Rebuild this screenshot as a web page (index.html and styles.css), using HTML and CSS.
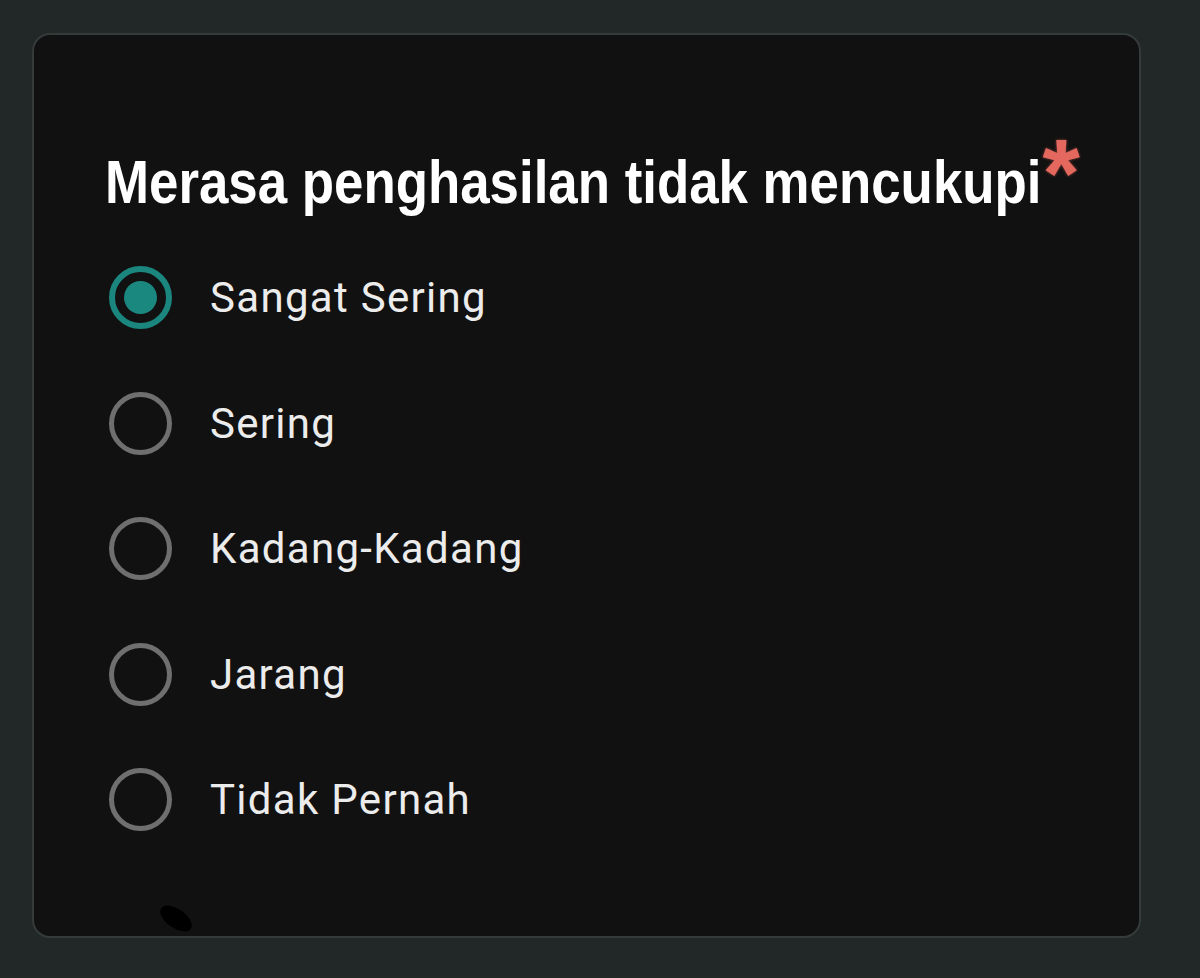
FILE: index.html
```html
<!DOCTYPE html>
<html lang="id">
<head>
<meta charset="utf-8">
<title>Merasa penghasilan tidak mencukupi</title>
<link rel="stylesheet" href="styles.css">
</head>
<body>
<div class="card">
  <h1 class="title"><span class="title-text">Merasa penghasilan tidak mencukupi</span><span class="req">*</span></h1>
  <div class="options">
    <label class="option"><span class="radio checked"></span><span class="label">Sangat Sering</span></label>
    <label class="option"><span class="radio"></span><span class="label">Sering</span></label>
    <label class="option"><span class="radio"></span><span class="label">Kadang-Kadang</span></label>
    <label class="option"><span class="radio"></span><span class="label">Jarang</span></label>
    <label class="option"><span class="radio"></span><span class="label">Tidak Pernah</span></label>
  </div>
  <span class="smudge"></span>
</div>
</body>
</html>
```
FILE: styles.css
```css
html, body {
  margin: 0;
  padding: 0;
}
body {
  background: #212827;
  width: 1200px;
  height: 978px;
  overflow: hidden;
}
.card {
  position: relative;
  box-sizing: border-box;
  margin: 33px 0 0 32px;
  width: 1109px;
  height: 905px;
  background: #111111;
  border: 2px solid #343b3a;
  border-radius: 18px;
  padding: 112px 0 0 71px;
}
.title {
  margin: 0;
  font-family: "Liberation Sans", Arial, sans-serif;
  font-weight: 700;
  font-size: 61px;
  line-height: 70px;
  height: 70px;
  color: #ffffff;
  white-space: nowrap;
}
.title-text {
  display: inline-block;
  transform: scaleX(0.866);
  transform-origin: 0 0;
  margin-right: -145px;
}
.req {
  font-size: 96px;
  line-height: 0;
  color: #e4685d;
  margin-left: 1px;
  vertical-align: -3px;
  text-shadow: 0 0 3px rgba(228, 104, 93, 0.6);
}
.options {
  display: flex;
  flex-direction: column;
  gap: 62.5px;
  margin-top: 49px;
  padding-left: 4px;
}
.option {
  display: flex;
  align-items: center;
  gap: 38px;
  height: 63px;
}
.radio {
  box-sizing: border-box;
  width: 63px;
  height: 63px;
  border-radius: 50%;
  border: 5px solid #6f6f6f;
  display: flex;
  align-items: center;
  justify-content: center;
  flex: none;
}
.radio.checked {
  border: 6px solid #1a867e;
}
.radio.checked::after {
  content: "";
  width: 33px;
  height: 33px;
  border-radius: 50%;
  background: #1b8880;
}
.label {
  font-family: Roboto, "Liberation Sans", sans-serif;
  font-size: 42px;
  letter-spacing: 1.3px;
  line-height: 63px;
  color: #ececec;
}
.smudge {
  position: absolute;
  left: 124px;
  top: 874px;
  width: 36px;
  height: 19px;
  border-radius: 50%;
  background: #000;
  transform: rotate(35deg);
}
```
